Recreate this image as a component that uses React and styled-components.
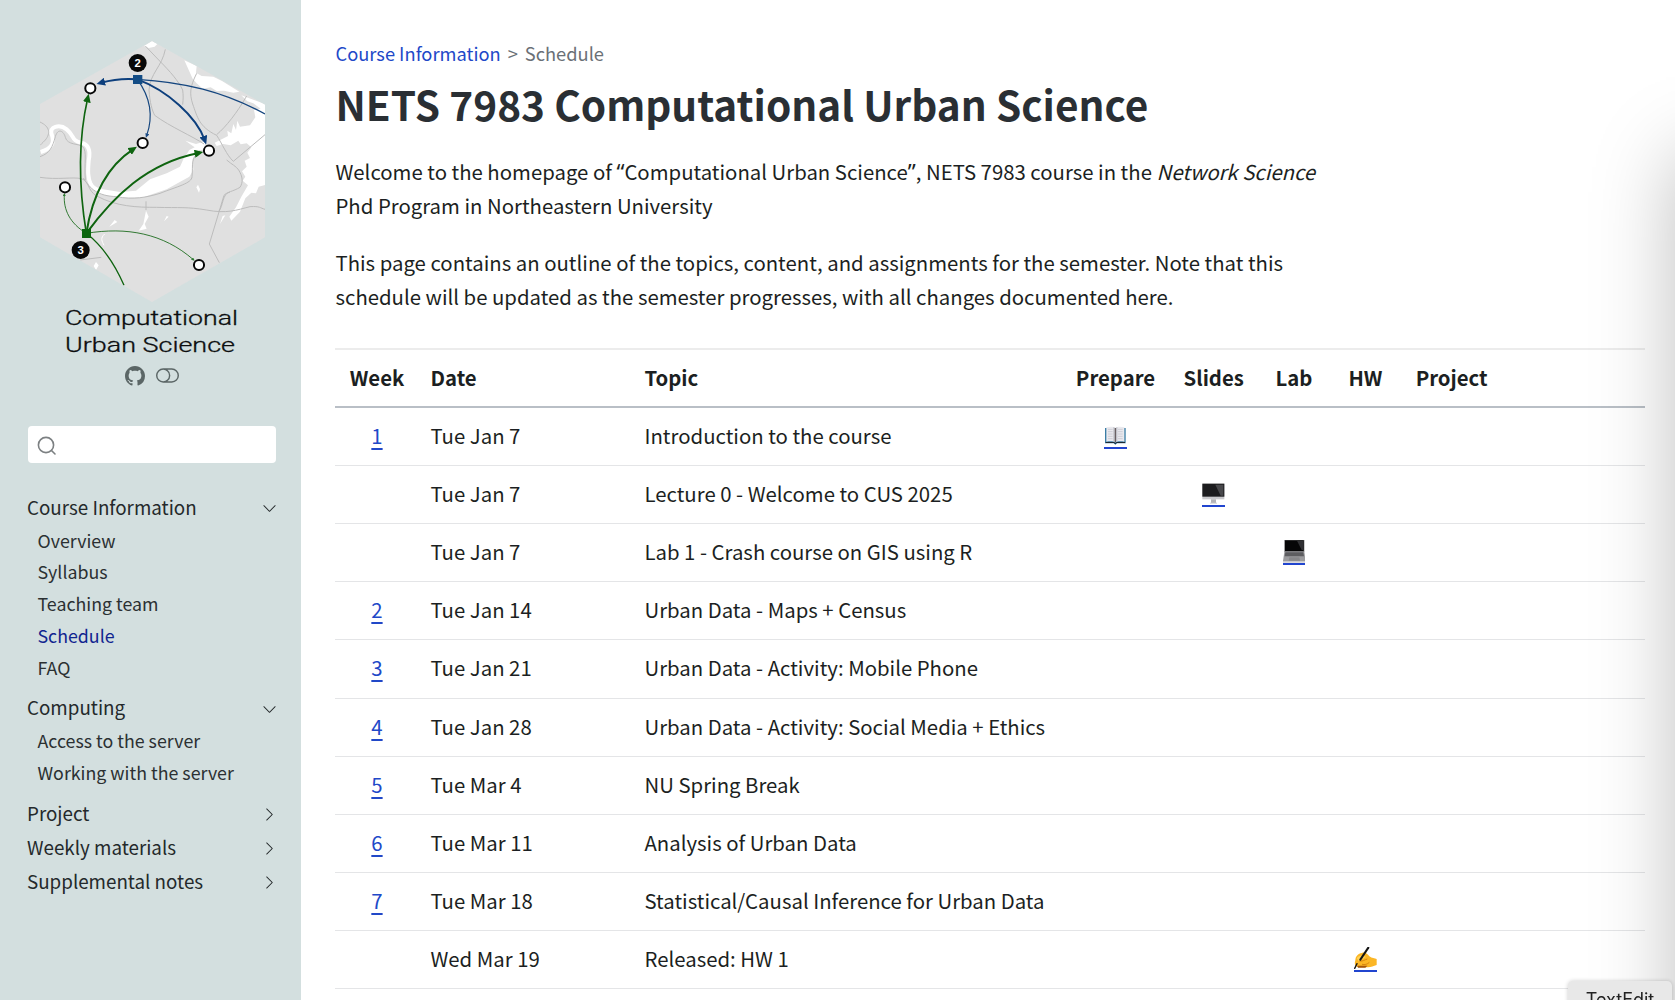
import React from "react";
import styled, { createGlobalStyle } from "styled-components";
import { BsGithub, BsToggleOff, BsChevronDown, BsChevronRight } from "react-icons/bs";

const GlobalStyle = createGlobalStyle`
  * { box-sizing: border-box; }
  html, body { margin: 0; padding: 0; background: #fff; overflow: hidden; }
  body {
    font-family: "Noto Sans CJK SC", "Noto Sans CJK JP", "Open Sans", sans-serif;
    color: #1c1f22;
    font-size: 20.35px;
    line-height: 34px;
  }
`;

const Page = styled.div`
  display: flex;
  height: 1000px;
  width: 1675px;
  overflow: hidden;
`;

const Sidebar = styled.aside`
  flex: 0 0 301.3px;
  background: #d3dfdf;
  padding: 41px 24.5px 0 27px;
`;

const Brand = styled.div`
  display: flex;
  flex-direction: column;
  align-items: center;

  > svg:first-child { margin-left: 1.5px; }
`;

const Tools = styled.div`
  display: flex;
  align-items: center;
  gap: 11.5px;
  height: 24px;
  margin-top: 6px;
  padding-left: 0.5px;
  color: #5b6666;

  svg + svg { margin-top: -2px; }
`;

const SearchBox = styled.div`
  display: flex;
  align-items: center;
  height: 37px;
  margin: 37.5px 0 27px 1px;
  padding: 3px 0 0 9px;
  width: 248px;
  background: #fff;
  border-radius: 4px;
`;

const NavSection = styled.div`
  display: flex;
  justify-content: space-between;
  align-items: center;
  height: 34px;
  line-height: 34px;
  font-size: 18.8px;
  color: #24292b;

  svg { margin-top: 4px; }
`;

const NavList = styled.ul`
  list-style: none;
  margin: 0 0 7.4px;
  padding: 0 0 0 10.5px;
`;

const NavItem = styled.li`
  height: 31.9px;
  line-height: 32px;
  font-size: 17.8px;
  color: ${(p) => (p.$active ? "#10248f" : "#2b3032")};
`;

const Main = styled.main`
  flex: 1;
  padding: 36px 30px 0 34.2px;
`;

const Crumbs = styled.nav`
  display: flex;
  gap: 7px;
  font-size: 18.3px;
  line-height: 34px;
  color: #6a7076;
`;

const CrumbLink = styled.a`
  color: #2148c8;
`;

const Title = styled.h1`
  margin: 6px 0 0;
  font-size: 40.56px;
  line-height: 56px;
  font-weight: 700;
  color: #2a2f34;
  white-space: nowrap;
`;

const Para = styled.p`
  max-width: 1002px;
  margin: ${(p) => p.$top || "22.7px"} 0 0;
`;

const Quote = styled.span`
  font-family: "Noto Sans", sans-serif;
  font-size: 22.2px;
  line-height: 1;
`;

const Table = styled.table`
  display: block;
  margin-top: 35px;
  border-top: 2px solid #ececec;
`;

const Section = styled.tbody`
  display: block;
`;

const Row = styled.tr`
  display: grid;
  grid-template-columns: 81.5px 214px 432px 105px 91.4px 69.2px 73.8px 98.6px 1fr;
  height: ${(p) => (p.$head ? "58.2px" : "58.13px")};
  border-bottom: ${(p) => (p.$head ? "2px solid #b9bfc6" : "1.4px solid #e4e5e7")};
`;

const Cell = styled.td`
  display: flex;
  justify-content: ${(p) => (p.$center ? "center" : "flex-start")};
  padding: 10.1px 13.5px 0;
  line-height: 34px;
  white-space: nowrap;

  &:first-child { padding: 10.1px 0 0 1.5px; }
`;

const HeadCell = styled(Cell).attrs({ as: "th" })`
  font-weight: 700;
  padding-top: 10.5px;
  padding-left: ${(p) => (p.$center ? "0" : "13.5px")};
  padding-right: 0;

  &:first-child { padding-top: 10.5px; }
`;

const WeekLink = styled.a`
  color: #2148c8;
  text-decoration: underline;
  text-decoration-thickness: 2px;
  text-underline-offset: 4px;
`;

const IconLink = styled.a`
  display: block;
  height: 31px;
  padding-top: 6px;
  border-bottom: 2px solid #2145cf;

  svg { display: block; }
`;

const Overlay = styled.div`
  position: fixed;
  inset: 0;
  overflow: hidden;
  pointer-events: none;
`;

const OffscreenWindow = styled.div`
  position: absolute;
  left: 1675px;
  top: 154px;
  width: 400px;
  height: 1200px;
  box-shadow: 0 0 76px rgba(0, 0, 0, 0.25);
`;

const DockLabel = styled.div`
  position: absolute;
  left: 1568px;
  top: 981px;
  width: 104px;
  height: 36px;
  border-radius: 5px;
  background: #e8e8e8;
  box-shadow: 0 0 4px rgba(0, 0, 0, 0.2);
  font-family: Inter, sans-serif;
  font-size: 18px;
  line-height: 38px;
  text-align: center;
  color: #222;
`;

const nodes = [[211, 175], [368, 339], [567, 362], [135, 472], [537, 705]];

function CityLogo() {
  return (
    <svg width="225" height="261" viewBox="60 33 675 783">
      <defs>
        <clipPath id="hex"><path d="M396 33 735 224V622L396 816 60 622V222Z" /></clipPath>
        <marker id="ag" markerUnits="userSpaceOnUse" markerWidth="26" markerHeight="24" refX="12" refY="12" orient="auto"><path d="M0 0 26 12 0 24Z" fill="#0f6410" /></marker>
        <marker id="ags" markerUnits="userSpaceOnUse" markerWidth="10" markerHeight="10" refX="5" refY="5" orient="auto"><path d="M0 0 10 5 0 10Z" fill="#2f7a33" /></marker>
        <marker id="ab" markerUnits="userSpaceOnUse" markerWidth="26" markerHeight="24" refX="12" refY="12" orient="auto"><path d="M0 0 26 12 0 24Z" fill="#0d3f7d" /></marker>
        <marker id="abs" markerUnits="userSpaceOnUse" markerWidth="13" markerHeight="12" refX="6" refY="6" orient="auto"><path d="M0 0 13 6 0 12Z" fill="#1c4b85" /></marker>
      </defs>
      <g clipPath="url(#hex)">
        <path d="M60 30H735V816H60Z" fill="#e0e0e0" />
        <g fill="#fff">
          <path d="M372 48 396 33 412 42 404 50 386 54Z" />
          <path d="M493 91 530 108 528 128 545 138 580 140 606 153 658 185 640 188 612 182 590 183 572 172 548 176 530 160 518 146Z" />
          <path d="M664 196 735 222V465L716 470 708 490 694 488 676 505 660 545 634 572 628 560 648 532 664 500 684 466 668 452 676 440 666 424 680 410 674 392 690 384 682 368 694 352 680 340 662 343 655 332 632 346 610 342 590 348 584 338 608 326 624 318 622 302 634 310 640 282 648 300 652 272 660 290 690 286 706 262 702 240 722 236 700 220 682 214Z" />
          <path d="M490 388 508 360 524 352 496 332 528 342 556 334 552 358 530 364 518 388 520 420 508 440 440 478 370 502 300 504 230 490 226 474 300 486 348 482 390 448 440 430 480 410Z" />
          <path d="M534 464 540 478 537 488 529 472ZM228 696 236 706 228 720 221 708ZM608 558 616 556 600 582ZM378 542 386 560 374 582 380 596 356 602 370 582ZM284 570 292 576 268 590ZM440 558 446 560 432 574Z" />
        </g>
        <path d="M62 366C94 356 104 340 96 316 84 288 120 282 140 298 164 318 154 332 184 338 208 344 212 364 206 392 204 420 202 440 212 462 222 482 260 492 300 496" fill="none" stroke="#fff" strokeWidth="12" />
        <g fill="none" stroke="#bcbcbc" strokeWidth="3">
          <path d="M376 48 420 94C450 124 476 154 488 180 490 196 490 206 488 224M620 390C636 404 648 408 656 420 668 440 670 456 660 472 640 484 620 486 612 496L568 642 598 698" />
          <path d="M436 58C426 110 390 130 387 180 390 220 396 240 404 256 450 290 520 320 552 342M530 130C510 170 508 190 518 222 532 260 536 290 590 316 606 340 620 376 640 394" />
          <path d="M680 198C650 250 618 290 590 314M735 314 640 394M60 442C110 450 160 440 184 446 210 454 200 480 230 498 290 530 350 532 410 532 480 534 500 530 560 540 620 552 650 540 690 530 720 528 720 534 735 538" />
          <path d="M190 444C210 476 232 498 290 500 340 510 380 502 420 490 470 470 516 460 516 440 520 400 510 388 540 362M630 486C606 490 610 530 596 544" />
          <path d="M60 276C90 290 92 310 76 330 66 340 62 344 60 346M60 380C90 370 98 350 106 320 114 292 132 304 136 322 142 346 176 340 188 350 202 364 192 400 196 450M378 514V540M180 690 244 682" />
          <path d="M254 612C240 624 246 634 252 646" stroke="#fff" />
        </g>
        <g fill="none" stroke="#15467f">
          <path d="M352 148C310 144 280 148 243 158" strokeWidth="6" markerEnd="url(#ab)" stroke="#0d3f7d" />
          <path d="M352 148C440 180 530 260 554 330" strokeWidth="6" markerEnd="url(#ab)" stroke="#0d3f7d" />
          <path d="M352 148C390 200 400 260 380 317" strokeWidth="3.5" markerEnd="url(#abs)" />
          <path d="M352 148C490 156 610 184 735 252" strokeWidth="4" />
        </g>
        <g fill="none" stroke="#0f6410">
          <path d="M199 610C176 470 172 340 203 205" strokeWidth="5" markerEnd="url(#ag)" />
          <path d="M199 610C216 500 260 410 339 358" strokeWidth="6" markerEnd="url(#ag)" />
          <path d="M199 610C280 500 380 400 536 369" strokeWidth="6" markerEnd="url(#ag)" />
          <path d="M199 610C150 580 130 540 133 494" strokeWidth="2.5" markerEnd="url(#ags)" />
          <path d="M199 610C320 590 430 610 520 689" strokeWidth="2.5" markerEnd="url(#ags)" />
          <path d="M199 610C250 650 286 706 312 766" strokeWidth="4" />
        </g>
        <path d="M339 135h28v27h-28Z" fill="#134c85" />
        <path d="M186 597h27v27h-27Z" fill="#0b660e" />
        {nodes.map(([x, y]) => (
          <circle key={x} cx={x} cy={y} r="15.2" fill="#fff" stroke="#080808" strokeWidth="6" />
        ))}
        <circle cx="353" cy="99" r="27" fill="#080808" />
        <circle cx="182" cy="660" r="27" fill="#080808" />
        <g fill="#fff" fontFamily="Liberation Sans, sans-serif" fontWeight="700" fontSize="34" textAnchor="middle">
          <text x="353" y="111">2</text>
          <text x="182" y="672">3</text>
        </g>
      </g>
    </svg>
  );
}

function Wordmark() {
  return (
    <svg width="176" height="56" viewBox="0 0 176 56" fill="#0c0e0f" fontFamily="Roboto, sans-serif" fontWeight="300" fontSize="20" stroke="#0c0e0f" strokeWidth="0.3">
      <text x="1" y="23" textLength="173" lengthAdjust="spacingAndGlyphs">Computational</text>
      <text x="1" y="49.5" textLength="170" lengthAdjust="spacingAndGlyphs">Urban Science</text>
    </svg>
  );
}

function SearchIcon() {
  return (
    <svg width="20" height="20" viewBox="0 0 20 20" fill="none" stroke="#7c8082" strokeWidth="1.6" strokeLinecap="round">
      <circle cx="9" cy="9" r="7.6" />
      <path d="M14.5 14.5 18 18" />
    </svg>
  );
}

function BookIcon() {
  return (
    <svg width="22.7" height="23" viewBox="0 0 68 69">
      <path d="M3 12H65V58H39L34 62 29 58H3Z" fill="#3c7ea6" />
      <path d="M5 54H30L34 58 38 54H63V57H38L34 61 30 57H5Z" fill="#1d2a33" />
      <path d="M7 10C17 7 28 7 34 12 40 7 51 7 61 10V53C51 51 40 51 34 55 28 51 17 51 7 53Z" fill="#e9e9ee" />
      <path d="M28 9 34 12 40 9V52L34 55 28 52Z" fill="#bfc0c7" />
      <path d="M34 12V55" stroke="#5b4f51" strokeWidth="3" />
      <path d="M12 16H26M12 23H26M12 30H26M12 37H26M12 44H26M42 16H56M42 23H56M42 30H56M42 37H56M42 44H56" stroke="#c6c7cf" strokeWidth="2.4" />
    </svg>
  );
}

function DesktopIcon() {
  return (
    <svg width="22.7" height="23" viewBox="0 0 68 69">
      <path d="M1 5H67V52H1Z" fill="#c9c9cc" />
      <path d="M1 5H67V44H1Z" fill="#1c1c1e" />
      <path d="M40 8H64V41H56Z" fill="#48484b" />
      <path d="M27 52H42V63H27Z" fill="#b4b4b8" />
      <path d="M24 62H45V65H24Z" fill="#cfcfd2" />
    </svg>
  );
}

function LaptopIcon() {
  return (
    <svg width="22.7" height="23" viewBox="0 0 68 69">
      <path d="M4 0H64V36H4Z" fill="#6f6f72" />
      <path d="M6 1H62V33H6Z" fill="#060607" />
      <path d="M42 2H61V30H56Z" fill="#303033" />
      <path d="M4 35H64L68 63H0Z" fill="#9b9b9e" />
      <path d="M7 37H61L63 49H5Z" fill="#5d5d60" />
      <path d="M19 52H49L51 62H17Z" fill="#88888b" />
      <path d="M0 63H68V68H0Z" fill="#c9c9cc" />
    </svg>
  );
}

function WritingIcon() {
  return (
    <svg width="22.7" height="23" viewBox="0 0 68 69">
      <path d="M4 40C4 28 12 20 24 18 30 14 40 20 46 28 54 34 62 34 68 36V54C58 56 52 61 42 61H14C4 60 0 52 4 40Z" fill="#fbb625" />
      <path d="M8 34C16 22 28 24 36 30 30 32 24 40 14 42Z" fill="#ffd257" />
      <path d="M16 42C26 44 32 38 40 36M24 52C32 54 40 52 46 46" fill="none" stroke="#d9860f" strokeWidth="3" />
      <path d="M10 56H40L34 62H12Z" fill="#a3560d" />
      <path d="M43 2 19 38" stroke="#141414" strokeWidth="6" strokeLinecap="round" />
      <path d="M9 50 2 64" stroke="#141414" strokeWidth="4" strokeLinecap="round" />
    </svg>
  );
}

const rows = [
  { week: "1", date: "Tue Jan 7", topic: "Introduction to the course", prepare: <BookIcon /> },
  { date: "Tue Jan 7", topic: "Lecture 0 - Welcome to CUS 2025", slides: <DesktopIcon /> },
  { date: "Tue Jan 7", topic: "Lab 1 - Crash course on GIS using R", lab: <LaptopIcon /> },
  { week: "2", date: "Tue Jan 14", topic: "Urban Data - Maps + Census" },
  { week: "3", date: "Tue Jan 21", topic: "Urban Data - Activity: Mobile Phone" },
  { week: "4", date: "Tue Jan 28", topic: "Urban Data - Activity: Social Media + Ethics" },
  { week: "5", date: "Tue Mar 4", topic: "NU Spring Break" },
  { week: "6", date: "Tue Mar 11", topic: "Analysis of Urban Data" },
  { week: "7", date: "Tue Mar 18", topic: "Statistical/Causal Inference for Urban Data" },
  { date: "Wed Mar 19", topic: "Released: HW 1", hw: <WritingIcon /> },
  {},
];

const linkColumns = ["prepare", "slides", "lab", "hw", "project"];

const menu = [
  { label: "Course Information", items: ["Overview", "Syllabus", "Teaching team", "Schedule", "FAQ"] },
  { label: "Computing", items: ["Access to the server", "Working with the server"] },
  { label: "Project" },
  { label: "Weekly materials" },
  { label: "Supplemental notes" },
];

export default function App() {
  return (
    <Page>
      <GlobalStyle />
      <Sidebar>
        <Brand>
          <CityLogo />
          <Wordmark />
          <Tools>
            <BsGithub size={20} />
            <BsToggleOff size={23} />
          </Tools>
        </Brand>
        <SearchBox><SearchIcon /></SearchBox>
        {menu.map((group) => (
          <React.Fragment key={group.label}>
            <NavSection>
              {group.label}
              {group.items ? <BsChevronDown size={15} /> : <BsChevronRight size={15} />}
            </NavSection>
            {group.items && (
              <NavList>
                {group.items.map((item) => (
                  <NavItem key={item} $active={item === "Schedule"}>{item}</NavItem>
                ))}
              </NavList>
            )}
          </React.Fragment>
        ))}
      </Sidebar>
      <Main>
        <Crumbs>
          <CrumbLink>Course Information</CrumbLink>
          <span>&gt;</span>
          <span>Schedule</span>
        </Crumbs>
        <Title>NETS 7983 Computational Urban Science</Title>
        <Para $top="22px">
          Welcome to the homepage of <Quote>“</Quote>Computational Urban Science<Quote>”</Quote>, NETS 7983 course in the <em>Network Science</em> Phd Program in Northeastern University
        </Para>
        <Para>
          This page contains an outline of the topics, content, and assignments for the semester. Note that this schedule will be updated as the semester progresses, with all changes documented here.
        </Para>
        <Table>
          <Section as="thead">
            <Row $head>
              <HeadCell $center>Week</HeadCell>
              <HeadCell>Date</HeadCell>
              <HeadCell>Topic</HeadCell>
              <HeadCell $center>Prepare</HeadCell>
              <HeadCell $center>Slides</HeadCell>
              <HeadCell $center>Lab</HeadCell>
              <HeadCell $center>HW</HeadCell>
              <HeadCell $center>Project</HeadCell>
            </Row>
          </Section>
          <Section>
            {rows.map((row, i) => (
              <Row key={i}>
                <Cell $center>{row.week && <WeekLink>{row.week}</WeekLink>}</Cell>
                <Cell>{row.date}</Cell>
                <Cell>{row.topic}</Cell>
                {linkColumns.map((name) => (
                  <Cell key={name} $center>{row[name] && <IconLink>{row[name]}</IconLink>}</Cell>
                ))}
              </Row>
            ))}
          </Section>
        </Table>
      </Main>
      <Overlay>
        <OffscreenWindow />
        <DockLabel>TextEdit</DockLabel>
      </Overlay>
    </Page>
  );
}
